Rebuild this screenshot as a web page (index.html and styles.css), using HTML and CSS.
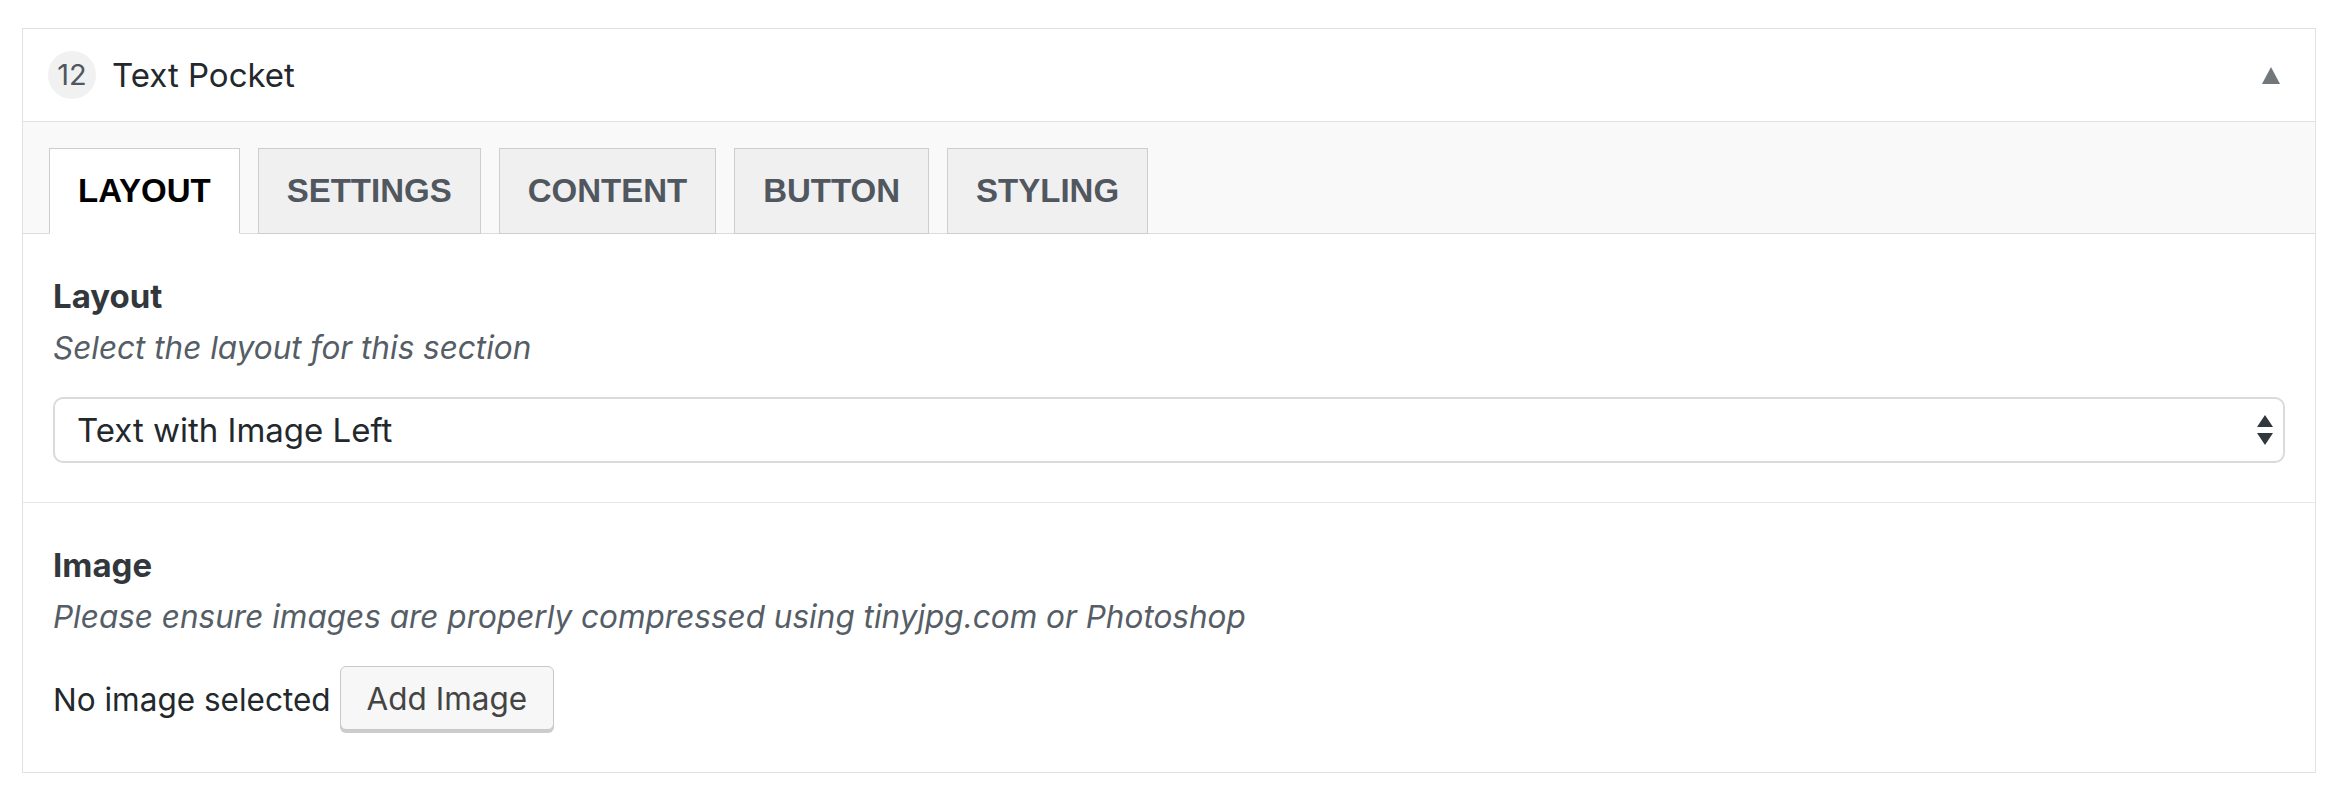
FILE: index.html
```html
<!DOCTYPE html>
<html lang="en">
<head>
    <meta charset="UTF-8">
    <meta name="viewport" content="width=device-width, initial-scale=1.0">
    <title>Text Pocket</title>
    <link rel="stylesheet" href="styles.css">
</head>
<body>

    <div class="panel">
        <div class="panel-head">
            <span class="order">12</span>
            <span class="title">Text Pocket</span>
            <svg class="toggle" width="18" height="17" viewBox="0 0 18 17"><path d="M9 0 L18 17 L0 17 Z" fill="#72777c"/></svg>
        </div>

        <div class="tabs">
            <a class="tab active">LAYOUT</a>
            <a class="tab">SETTINGS</a>
            <a class="tab">CONTENT</a>
            <a class="tab">BUTTON</a>
            <a class="tab">STYLING</a>
        </div>

        <div class="field">
            <div class="label">Layout</div>
            <p class="desc">Select the layout for this section</p>
            <div class="select">
                <span>Text with Image Left</span>
                <svg width="16" height="30" viewBox="0 0 16 30"><path d="M8 0 L16 12 L0 12 Z M0 18 L16 18 L8 30 Z" fill="#32373c"/></svg>
            </div>
        </div>

        <div class="field">
            <div class="label">Image</div>
            <p class="desc">Please ensure images are properly compressed using tinyjpg.com or Photoshop</p>
            <div class="image-row">
                <span>No image selected</span>
                <button class="btn">Add Image</button>
            </div>
        </div>
    </div>

</body>
</html>
```

FILE: styles.css
```css
body {
    margin: 0;
    padding: 28px 13px 0 22px;
    background-color: #fff;
    font-family: Inter, "Noto Sans", sans-serif;
    color: #23282d;
}

.panel {
    border: 1px solid #e2e2e2;
    background-color: #fff;
}

.panel-head {
    display: flex;
    align-items: center;
    height: 92px;
    padding: 0 35px 0 25px;
    border-bottom: 1px solid #e2e2e2;
}

.order {
    width: 48px;
    height: 48px;
    border-radius: 50%;
    background-color: #f1f1f1;
    color: #50575e;
    font-size: 29px;
    line-height: 48px;
    text-align: center;
}

.title {
    flex: 1;
    margin-left: 16px;
    font-size: 33px;
}

.tabs {
    display: flex;
    gap: 18px;
    padding: 26px 26px 0;
    background-color: #f9f9f9;
    border-bottom: 1px solid #dcdcdc;
}

.tab {
    display: block;
    height: 84px;
    line-height: 84px;
    padding: 0 28px;
    margin-bottom: -1px;
    border: 1px solid #cdcdcd;
    background-color: #f0f0f0;
    color: #50575e;
    font-family: "Liberation Sans", Arial, sans-serif;
    font-size: 33px;
    font-weight: bold;
}

.tab.active {
    background-color: #fff;
    border-bottom-color: #fff;
    color: #000;
}

.field {
    padding: 39px 30px 39px;
}

.field + .field {
    border-top: 1px solid #e8e8e8;
}

.label {
    font-size: 33px;
    font-weight: 700;
    line-height: 46px;
    color: #32373c;
}

.desc {
    margin: 7px 0 27px;
    font-size: 31.5px;
    line-height: 44px;
    font-style: italic;
    color: #555d66;
}

.select {
    display: flex;
    align-items: center;
    justify-content: space-between;
    height: 62px;
    padding: 0 10px 0 22px;
    border: 2px solid #dadada;
    border-radius: 10px;
    font-size: 33px;
}

.image-row {
    display: flex;
    align-items: center;
    gap: 9px;
    font-size: 31.5px;
}

.btn {
    height: 64px;
    padding: 0 26px;
    margin-bottom: 3px;
    border: 1px solid #c8c8c8;
    border-radius: 6px;
    background-color: #f7f7f7;
    box-shadow: 0 3px 0 #cccccc;
    color: #444;
    font-family: Inter, "Noto Sans", sans-serif;
    font-size: 31.5px;
}
```
